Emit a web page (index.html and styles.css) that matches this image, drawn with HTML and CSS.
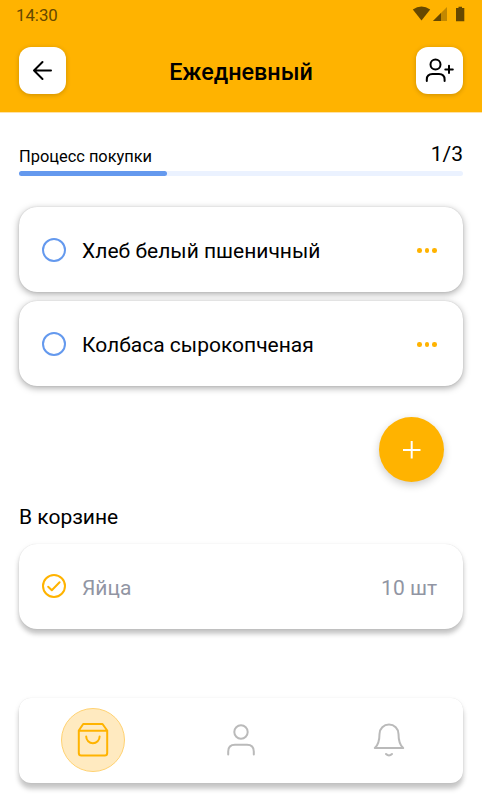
FILE: index.html
```html
<!DOCTYPE html>
<html lang="ru">
<head>
    <meta charset="UTF-8">
    <meta name="viewport" content="width=device-width, initial-scale=1.0">
    <title>Ежедневный</title>
    <link rel="stylesheet" href="styles.css">
</head>
<body>

    <header class="header">
        <div class="status-bar">
            <span class="time">14:30</span>
            <svg class="status-icons" width="54" height="16" viewBox="0 0 54 16">
                <path d="M0.8 3.6Q9.5 -2.4 18.2 3.6L9.5 14.4Z"/>
                <path class="signal-weak" d="M35 1V15H21Z"/>
                <path d="M29 7V15H21Z"/>
                <path d="M46.5 0.7H50V2H52.3V15.3H44V2H46.5Z"/>
            </svg>
        </div>
        <div class="top-bar">
            <button class="icon-button" aria-label="Назад">
                <svg width="47" height="47" viewBox="0 0 47 47">
                    <path d="M32 23.5H15M23.5 15L15 23.5L23.5 32"/>
                </svg>
            </button>
            <h1 class="title">Ежедневный</h1>
            <button class="icon-button" aria-label="Добавить участника">
                <svg width="47" height="47" viewBox="0 0 47 47">
                    <circle cx="19.5" cy="17.5" r="5"/>
                    <path d="M10.8 34V32.5Q10.8 27 16.5 27H23Q28.6 27 28.6 32.5V34M33 18.8V26M29.3 22.4H36.8"/>
                </svg>
            </button>
        </div>
    </header>

    <main class="content">
        <div class="progress-info">
            <span class="progress-label">Процесс покупки</span>
            <span class="progress-count">1/3</span>
        </div>
        <div class="progress">
            <div class="progress-value"></div>
        </div>

        <ul class="list">
            <li class="card">
                <span class="check"></span>
                <span class="name">Хлеб белый пшеничный</span>
                <span class="dots"><i></i><i></i><i></i></span>
            </li>
            <li class="card">
                <span class="check"></span>
                <span class="name">Колбаса сырокопченая</span>
                <span class="dots"><i></i><i></i><i></i></span>
            </li>
        </ul>

        <button class="add-button" aria-label="Добавить">
            <svg width="65" height="65" viewBox="0 0 65 65">
                <path d="M32.7 24V41.5M24 33H41.5"/>
            </svg>
        </button>

        <h2 class="subtitle">В корзине</h2>
        <div class="card card-done">
            <span class="check check-done">
                <svg width="24" height="24" viewBox="0 0 24 24">
                    <path d="M6.2 12.8L9.8 16.2L17.6 8.2"/>
                </svg>
            </span>
            <span class="name">Яйца</span>
            <span class="amount">10 шт</span>
        </div>
    </main>

    <nav class="nav">
        <a class="nav-item active">
            <svg width="36" height="40" viewBox="0 0 36 40">
                <path d="M3.8 10.5L8.2 4H27.5L32.2 10.5V33Q32.2 35.5 29.7 35.5H6.3Q3.8 35.5 3.8 33V10.5ZM3.8 10.8H32.2M11.2 16.5A6.7 6.7 0 0 0 24.6 16.5"/>
            </svg>
        </a>
        <a class="nav-item">
            <svg width="36" height="40" viewBox="0 0 36 40">
                <circle cx="18" cy="12" r="6.7"/>
                <path d="M5.2 34.5V31.5Q5.2 24.7 12 24.7H24Q30.8 24.7 30.8 31.5V34.5"/>
            </svg>
        </a>
        <a class="nav-item">
            <svg width="36" height="40" viewBox="0 0 36 40">
                <path d="M3.8 28Q8.5 24 8.5 14A9.5 9.5 0 0 1 27.5 14Q27.5 24 32.2 28ZM15 34Q18 37 21 34"/>
            </svg>
        </a>
    </nav>

</body>
</html>
```
FILE: styles.css
```css
* {
    box-sizing: border-box;
}
body {
    margin: 0;
    height: 800px;
    overflow: hidden;
    font-family: Roboto, sans-serif;
    background-color: #fff;
    color: #000;
}
button {
    padding: 0;
    border: none;
    cursor: pointer;
}
svg {
    display: block;
    fill: none;
    stroke: currentColor;
    stroke-width: 2;
    stroke-linecap: round;
    stroke-linejoin: round;
}
.header {
    height: 112px;
    background-color: #ffb300;
    box-shadow: 0 1px 0 #ffe2a6;
}
.status-bar {
    display: flex;
    justify-content: space-between;
    height: 47px;
    padding: 6px 16px 0;
}
.time {
    font-size: 16.8px;
    line-height: 19px;
    color: #664800;
}
.status-icons {
    fill: #664800;
    stroke: none;
}
.signal-weak {
    opacity: 0.4;
}
.top-bar {
    display: flex;
    align-items: center;
    justify-content: space-between;
    padding: 0 19px;
}
.icon-button {
    width: 47px;
    height: 47px;
    border-radius: 12px;
    background-color: #fff;
    color: #000;
    box-shadow: 0 1px 5px rgba(0, 0, 0, 0.2);
}
.title {
    margin: 2px 0 0;
    font-size: 23.4px;
    font-weight: 500;
    line-height: 28px;
}
.content {
    padding: 28px 19px 0;
}
.progress-info {
    display: flex;
    align-items: baseline;
    justify-content: space-between;
    height: 31px;
}
.progress-label {
    position: relative;
    top: 1px;
    font-size: 16.4px;
}
.progress-count {
    font-size: 21px;
    line-height: 28px;
}
.progress {
    height: 5px;
    margin-top: 0.4px;
    border-radius: 3px;
    background-color: #ebf2ff;
}
.progress-value {
    width: 33.33%;
    height: 5px;
    border-radius: 3px;
    background-color: #6499ee;
}
.list {
    display: grid;
    gap: 9px;
    margin: 31px 0 30.6px;
    padding: 0;
    list-style: none;
}
.card {
    display: flex;
    align-items: center;
    height: 85px;
    padding: 0 26px 0 23px;
    border-radius: 18px;
    background-color: #fff;
    box-shadow: 0 0 1px rgba(0, 0, 0, 0.2), 0 2px 7px rgba(0, 0, 0, 0.35);
}
.check {
    width: 24px;
    height: 24px;
    border: 2px solid #6499ee;
    border-radius: 50%;
}
.name {
    flex: 1;
    margin-left: 16px;
    padding-top: 3px;
    font-size: 21px;
}
.dots {
    display: flex;
    gap: 2.7px;
    padding: 1px 0.5px 0 0;
}
.dots i {
    width: 4.6px;
    height: 4.6px;
    border-radius: 50%;
    background-color: #ffb300;
}
.add-button {
    display: block;
    width: 65px;
    height: 65px;
    margin: 0 19px 0 auto;
    border-radius: 50%;
    background-color: #ffb300;
    color: #fff;
    box-shadow: 0 3px 8px rgba(0, 0, 0, 0.2);
}
.add-button svg {
    stroke-linecap: butt;
}
.subtitle {
    margin: 21px 0 12.6px;
    font-size: 21px;
    font-weight: 400;
    line-height: 28px;
}
.card-done {
    color: #9195a3;
    box-shadow: 0 0 1px rgba(0, 0, 0, 0.15), 0 5px 5px rgba(0, 0, 0, 0.2), 0 2px 6px rgba(0, 0, 0, 0.08);
}
.check-done {
    border: 2px solid #ffb300;
    color: #ffb300;
}
.check-done svg {
    margin: -2px;
}
.amount {
    padding-top: 3px;
    font-size: 21px;
}
.nav {
    display: flex;
    align-items: center;
    justify-content: space-around;
    height: 85px;
    margin: 69px 19px 0;
    border-radius: 12px;
    background-color: #fff;
    box-shadow: 0 0 1px rgba(0, 0, 0, 0.12), 0 6px 5px rgba(0, 0, 0, 0.2), 0 2px 6px rgba(0, 0, 0, 0.06);
}
.nav-item {
    display: flex;
    align-items: center;
    justify-content: center;
    width: 64px;
    height: 64px;
    border-radius: 50%;
    color: #bababa;
}
.active {
    border: 1px solid #ffd271;
    background-color: #ffeac0;
    color: #ffb300;
}
```
